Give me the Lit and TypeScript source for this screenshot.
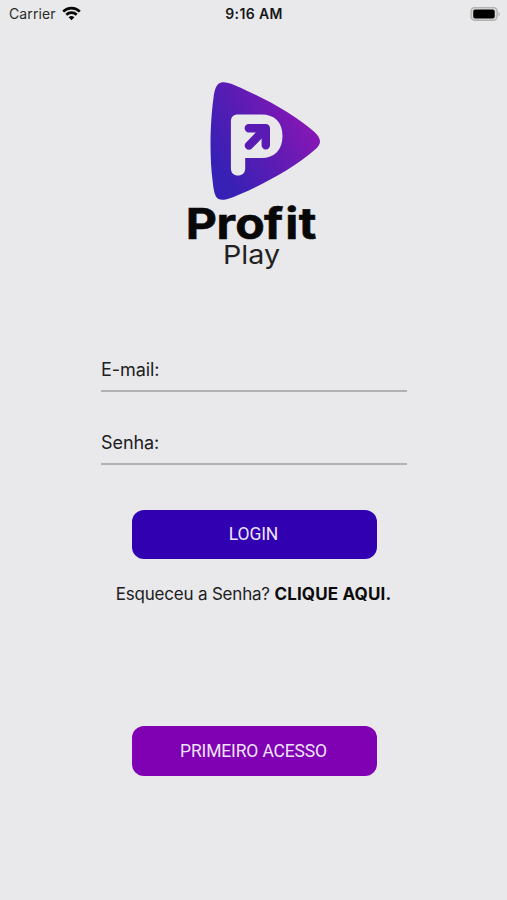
import { LitElement, html, css } from "lit";
import { customElement, property } from "lit/decorators.js";

@customElement("status-bar")
class StatusBar extends LitElement {
  static styles = css`
    :host { display: grid; grid-template-columns: 1fr auto 1fr; align-items: center; height: 28px; padding: 0 6px 0 7px; font: 14px/28px Inter, sans-serif; color: #2b2b2d; }
    .left { display: flex; align-items: center; gap: 6px; padding-left: 2px; }
    .carrier { letter-spacing: 0.1px; }
    .time { font-weight: 600; color: #161618; letter-spacing: 0.35px; }
    .right { display: flex; justify-content: flex-end; }
    svg { display: block; }
    .wifi { margin-top: -2px; }
  `;
  render() {
    return html`
      <div class="left">
        <span class="carrier">Carrier</span>
        <svg class="wifi" width="19" height="15" viewBox="0 0 19 15" fill="none" stroke="#080808" stroke-width="2.7">
          <path d="M1.2 5.6C5.8 1 13.2 1 17.8 5.6" />
          <path d="M4.3 8.8C7.2 6 11.8 6 14.7 8.8" />
          <path d="M6.6 11.2Q9.5 8.7 12.4 11.2L9.5 14.2Z" fill="#080808" stroke="none" />
        </svg>
      </div>
      <div class="time">9:16 AM</div>
      <div class="right">
        <svg width="31" height="15" viewBox="0 0 31 15">
          <rect x="1.1" y="0.5" width="26" height="12.8" rx="3.8" fill="#d8d8d9" stroke="#b2b2b3" stroke-width="1.4" />
          <rect x="3.2" y="2.5" width="21.5" height="9" rx="2" fill="#000" />
          <path d="M28.5 4.7Q31.5 7 28.5 9.3Z" fill="#b2b2b3" />
        </svg>
      </div>`;
  }
}

@customElement("brand-logo")
class BrandLogo extends LitElement {
  static styles = css`
    :host { display: block; width: 150px; height: 200px; }
    svg { display: block; }
    .name { font: 700 43px Inter, sans-serif; fill: #080808; stroke: #080808; stroke-width: 0.6; }
    .sub { font: 400 26px Inter, sans-serif; fill: #222; }
  `;
  render() {
    return html`
      <svg width="150" height="200" viewBox="180 78 150 200">
        <defs>
          <linearGradient id="fill" gradientUnits="userSpaceOnUse" x1="216" y1="168" x2="303" y2="118">
            <stop offset="0" stop-color="#3620b5" />
            <stop offset="0.5" stop-color="#5a1cb4" />
            <stop offset="1" stop-color="#8417b5" />
          </linearGradient>
        </defs>
        <path fill="url(#fill)" d="M221 82.5C227 81.5 236 86 249 92C273 103 298 118 314 132C318 136 319.5 139 319.5 141.5C319.5 144 318 147 314 150C296 166 266 183 240 194C229 199 222 201 218 199C214 197 213 189 212 180C209 157 209.5 123 213 98C214 89 216 83.5 221 82.5Z" />
        <path fill="#e9e9eb" d="M237.5 114.5H261C274 114.5 282 122 282 136C282 150 274 158 261 158H244.7V168.5C244.7 173 241.5 175.5 237.5 175.5S230.4 173 230.4 168.5V121.5C230.4 117 233 114.5 237.5 114.5Z" />
        <g fill="none" stroke="#5a1bb4" stroke-width="8.4" stroke-linecap="round">
          <path stroke-linejoin="round" d="M248.3 128.3H265.3V145.3" />
          <path d="M264 129.6L248.4 145.6" />
        </g>
        <g transform="translate(185.2 239) scale(1.12 1)">
          <text class="name" x="0 27.5 44.2 70 89 101" y="0">Profit</text>
        </g>
        <text class="sub" x="222.5" y="264" textLength="57" lengthAdjust="spacingAndGlyphs">Play</text>
      </svg>`;
  }
}

@customElement("text-field")
class TextField extends LitElement {
  @property() label = "";
  static styles = css`
    :host { display: block; box-sizing: border-box; width: 306px; height: 43px; border-bottom: 2px solid #b0b2b5; font: 18px/41px Inter, sans-serif; color: #202022; }
    .label { display: block; height: 41px; letter-spacing: -0.08px; }
  `;
  render() {
    return html`<span class="label">${this.label}</span>`;
  }
}

@customElement("app-root")
class AppRoot extends LitElement {
  static styles = css`
    :host { display: flex; flex-direction: column; align-items: center; width: 507px; height: 900px; overflow: hidden; background: #e9e9eb; font-family: Inter, sans-serif; }
    status-bar { width: 100%; box-sizing: border-box; }
    brand-logo { margin: 50px 0 71px; transform: translateX(1.5px); }
    .fields { display: flex; flex-direction: column; gap: 30px; margin-left: 1px; }
    .btn { width: 245px; height: 49px; margin: 45px 0 0 1px; padding: 0 1px 1px 0; border: 0; border-radius: 12px; color: #eee4fa; font: 17.5px/46px Roboto, sans-serif; letter-spacing: -0.16px; text-align: center; }
    .login { background: #3000b1; }
    .first { background: #8000b3; margin-top: 118px; height: 50px; }
    .forgot { margin-top: 21px; height: 28px; font-size: 17px; line-height: 28px; letter-spacing: -0.2px; color: #202022; white-space: nowrap; }
    .link { font-weight: 700; letter-spacing: 0.15px; color: #0b0b0c; }
  `;
  render() {
    return html`
      <status-bar></status-bar>
      <brand-logo></brand-logo>
      <div class="fields">
        <text-field label="E-mail:"></text-field>
        <text-field label="Senha:"></text-field>
      </div>
      <button class="btn login">LOGIN</button>
      <div class="forgot">Esqueceu a Senha? <span class="link">CLIQUE AQUI.</span></div>
      <button class="btn first">PRIMEIRO ACESSO</button>`;
  }
}
